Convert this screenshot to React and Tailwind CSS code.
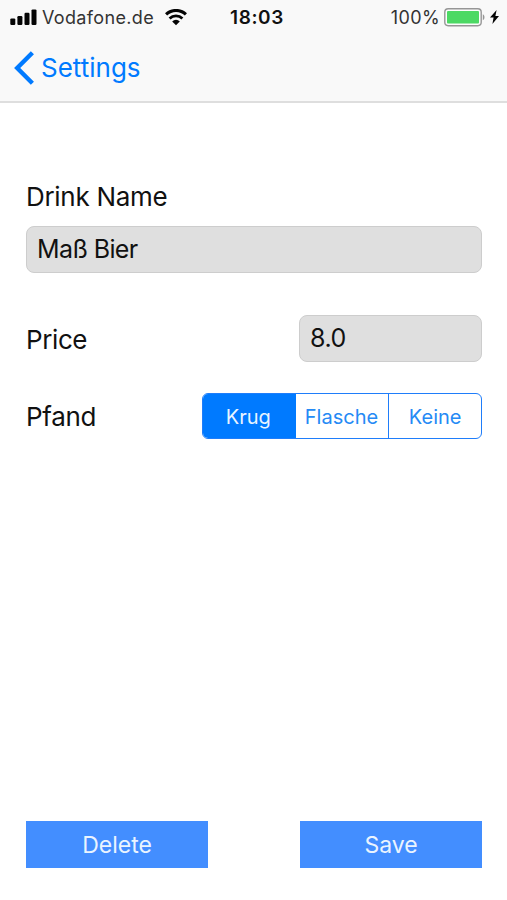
import { useState } from "react";

function SignalIcon() {
  return (
    <svg width="27" height="17" viewBox="0 0 27 17" fill="#050505">
      <rect x="0.3" y="9.4" width="5" height="6.6" rx="1.2" />
      <rect x="7.4" y="7" width="5" height="9" rx="1.2" />
      <rect x="14.5" y="3.7" width="5" height="12.3" rx="1.2" />
      <rect x="21.5" y="0.4" width="5" height="15.6" rx="1.2" />
    </svg>
  );
}

function WifiIcon() {
  return (
    <svg width="22" height="17" viewBox="0 0 22 17" fill="none" stroke="#050505">
      <path d="M1.1 5.4a14.4 14.4 0 0 1 19.8 0" strokeWidth="3.1" />
      <path d="M4.6 9.5a9.2 9.2 0 0 1 12.8 0" strokeWidth="2.8" />
      <path d="M7.2 12.4a5.4 5.4 0 0 1 7.6 0L11 16.3z" fill="#050505" stroke="none" />
    </svg>
  );
}

function BatteryIcon() {
  return (
    <svg width="42" height="19" viewBox="0 0 42 19">
      <rect x="0.8" y="0.8" width="36.4" height="16.9" rx="3.4" fill="#fdfdfd" stroke="#969696" strokeWidth="1.4" />
      <rect x="3" y="3" width="32" height="12.4" rx="1" fill="#4cd964" />
      <path d="M38.8 6.3c2.2.8 2.2 5.1 0 5.9z" fill="#969696" />
    </svg>
  );
}

function BoltIcon() {
  return (
    <svg width="9" height="14" viewBox="0 0 9 14" fill="#050505">
      <path d="M6.6 0 0 7.6h3.6L2.4 14 9 6H5.4z" />
    </svg>
  );
}

function StatusBar() {
  return (
    <div className="flex h-[33px] items-center pt-0.5 pl-2.5 pr-2 text-lg leading-none text-[#333]">
      <div className="flex w-[220px] items-center">
        <SignalIcon />
        <span className="ml-[5px] w-[113px] whitespace-nowrap tracking-[0.35px]">Vodafone.de</span>
        <span className="ml-2.5 -mt-px">
          <WifiIcon />
        </span>
      </div>
      <span className="text-[19px] font-semibold tracking-[0.6px] text-[#111]">18:03</span>
      <div className="ml-auto flex items-center">
        <span className="tracking-[0.4px]">100%</span>
        <span className="ml-1">
          <BatteryIcon />
        </span>
        <span className="ml-1 -mt-px">
          <BoltIcon />
        </span>
      </div>
    </div>
  );
}

function Header() {
  return (
    <header className="h-[103px] border-b-2 border-[#dedede] bg-[#f9f9f9]">
      <StatusBar />
      <button className="flex h-[70px] items-center pl-[14px] text-[26px] leading-none text-[#007aff]">
        <svg width="20" height="34" viewBox="0 0 20 34" fill="none" stroke="#007aff" strokeWidth="4.4">
          <path d="M18.4 1.8 3.2 17l15.2 15.2" />
        </svg>
        <span className="ml-[7px]">Settings</span>
      </button>
    </header>
  );
}

const options = ["Krug", "Flasche", "Keine"];

export default function App() {
  const [pfand, setPfand] = useState("Krug");

  return (
    <div className="flex h-[900px] w-[507px] flex-col overflow-hidden bg-white font-['Inter',sans-serif] text-[#111]">
      <Header />
      <main className="flex flex-1 flex-col pb-8 pl-[26px] pr-[25px] pt-[78px] text-[26px]">
        <label className="h-[45px] leading-[32px] tracking-[-0.3px]">Drink Name</label>
        <input
          className="h-[47px] w-full rounded-lg border border-[#cdcdcd] bg-[#dfdfdf] px-[10px] pb-0.5 text-[25px] tracking-[-0.6px] outline-none"
          defaultValue="Maß Bier"
        />
        <div className="mt-[42px] flex items-center justify-between">
          <span className="pt-px tracking-[-0.4px]">Price</span>
          <input
            className="h-[47px] w-[183px] rounded-lg border border-[#cdcdcd] bg-[#dfdfdf] px-[10px] pb-0.5 text-[25px] tracking-[-0.5px] outline-none"
            defaultValue="8.0"
          />
        </div>
        <div className="mt-[31px] flex items-center justify-between">
          <span className="tracking-[-0.3px]">Pfand</span>
          <div className="grid h-[46px] w-[280px] grid-cols-3 overflow-hidden rounded-md border border-[#1f7dfa] bg-white text-xl">
            {options.map((option, i) => (
              <button
                key={option}
                onClick={() => setPfand(option)}
                className={
                  option === pfand
                    ? "bg-[#007aff] pt-0.5 pr-0.5 text-[#e9f4ff]"
                    : i === 2
                      ? "border-l border-[#1f7dfa] pt-0.5 text-[#258af5]"
                      : "pt-0.5 pr-px text-[#258af5]"
                }
              >
                {option}
              </button>
            ))}
          </div>
        </div>
        <div className="mt-auto flex justify-between text-[23px] text-[#eaf4ff]">
          <button className="h-[47px] w-[182px] bg-[#438eff] pt-0.5">Delete</button>
          <button className="h-[47px] w-[182px] bg-[#438eff] pt-0.5">Save</button>
        </div>
      </main>
    </div>
  );
}
